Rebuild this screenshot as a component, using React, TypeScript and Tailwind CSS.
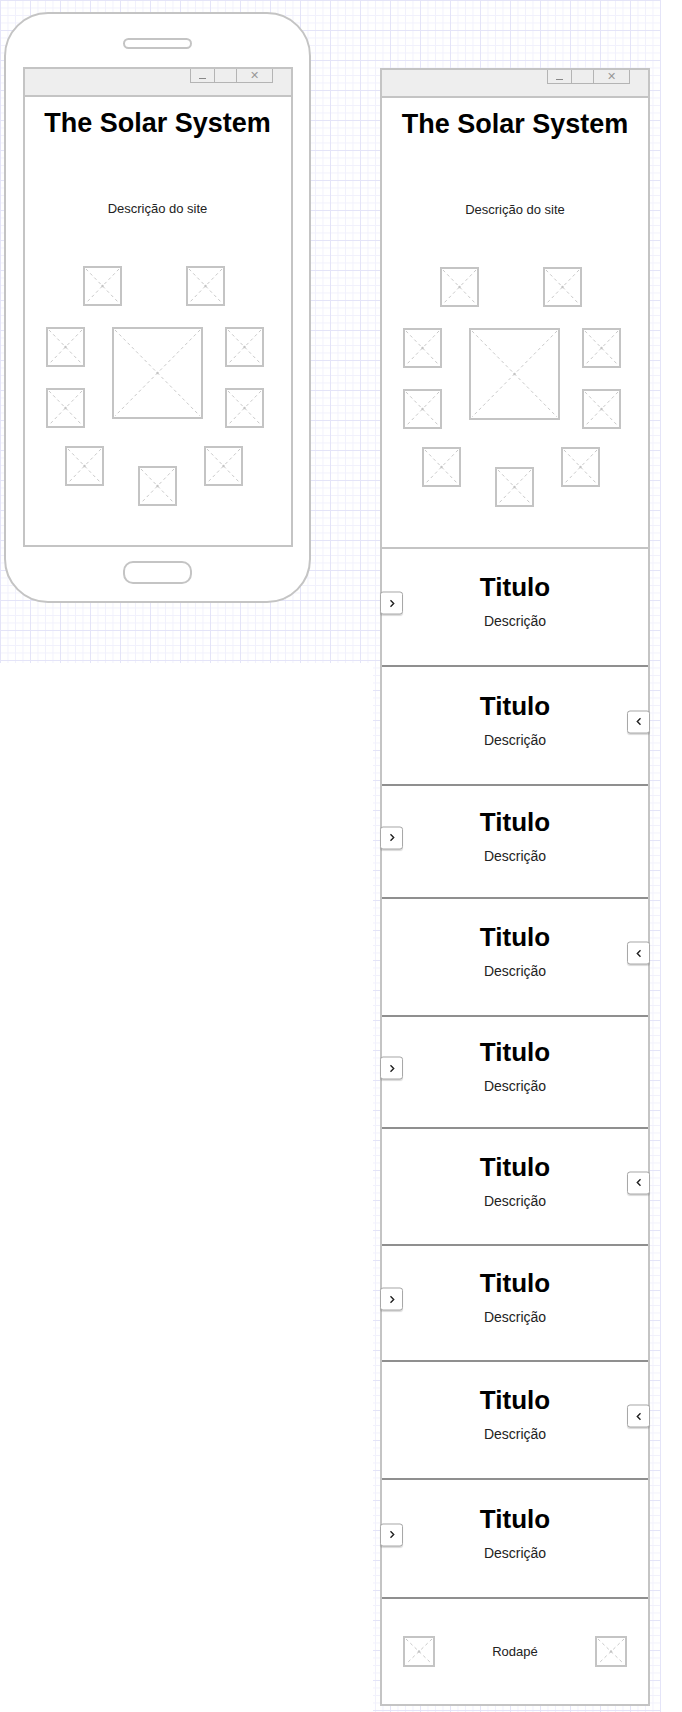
import type { ReactNode } from "react";

const GRID =
  "bg-[linear-gradient(to_right,#e4e4f8_1px,transparent_1px),linear-gradient(to_bottom,#e4e4f8_1px,transparent_1px),linear-gradient(to_right,#f1f1fc_1px,transparent_1px),linear-gradient(to_bottom,#f1f1fc_1px,transparent_1px)] bg-size-[30px_30px,30px_30px,7.5px_7.5px,7.5px_7.5px]";

// height of each content section, divider to divider
const SECTIONS = [118, 119, 113, 118, 112, 117, 116, 118, 119];

function Placeholder({ w, h, className = "" }: { w: number; h: number; className?: string }) {
  return (
    <svg width={w} height={h} viewBox={`0 0 ${w} ${h}`} className={`shrink-0 ${className}`}>
      <rect x="1" y="1" width={w - 2} height={h - 2} fill="#fff" stroke="#c4c4c4" strokeWidth="2" />
      <line x1="3" y1="3" x2={w - 3} y2={h - 3} stroke="#c9c9c9" strokeWidth="1" strokeDasharray="3 3" />
      <line x1={w - 3} y1="3" x2="3" y2={h - 3} stroke="#c9c9c9" strokeWidth="1" strokeDasharray="3 3" />
      <circle cx={w / 2} cy={h / 2} r="1.2" fill="#c4c4c4" />
    </svg>
  );
}

function TitleBar() {
  return (
    <div className="h-[28px] bg-[#eeeeee] border-b-2 border-[#c4c4c4] flex justify-end pr-[18px]">
      <div className="flex h-[14px] border-x border-b border-[#b4b4b4]">
        <div className="w-[23px] flex items-end justify-center pb-[3px]">
          <div className="w-[7px] h-px bg-[#888]" />
        </div>
        <div className="w-[22px] border-l border-[#b4b4b4]" />
        <div className="w-[36px] border-l border-[#b4b4b4] flex items-center justify-center text-[11px] leading-none text-[#999]">
          ✕
        </div>
      </div>
    </div>
  );
}

function Header({ bordered }: { bordered?: boolean }) {
  return (
    <div className={bordered ? "h-[451px] pt-[13px] border-b-2 border-[#c4c4c4]" : "h-[448px] pt-[13px]"}>
      <h1 className="text-[27px] leading-[27px] font-bold text-center text-black">The Solar System</h1>
      <p className="mt-[64px] text-[13px] leading-[16px] text-center text-[#222]">Descrição do site</p>

      {/* planet placeholders */}
      <div className="mt-[49px] flex pl-[58px] gap-[64px]">
        <Placeholder w={39} h={40} />
        <Placeholder w={39} h={40} />
      </div>
      <div className="mt-[21px] flex pl-[21px]">
        <div className="flex flex-col gap-[21px]">
          <Placeholder w={39} h={40} />
          <Placeholder w={39} h={40} />
        </div>
        <Placeholder w={91} h={92} className="ml-[27px]" />
        <div className="ml-[22px] flex flex-col gap-[21px]">
          <Placeholder w={39} h={40} />
          <Placeholder w={39} h={40} />
        </div>
      </div>
      <div className="mt-[18px] flex pl-[40px]">
        <Placeholder w={39} h={40} />
        <Placeholder w={39} h={40} className="ml-[34px] mt-[20px]" />
        <Placeholder w={39} h={40} className="ml-[27px]" />
      </div>
    </div>
  );
}

function Window({ children }: { children: ReactNode }) {
  return <div className="w-[270px] border-2 border-[#c4c4c4] bg-white">{children}</div>;
}

function ArrowButton({ dir }: { dir: "left" | "right" }) {
  return (
    <div
      className={`absolute top-1/2 -translate-y-[calc(50%+4px)] w-[23px] h-[23px] bg-white border border-[#a8a8a8] rounded-[3px] shadow-[0_1px_1px_rgba(0,0,0,0.15)] flex items-center justify-center ${
        dir === "right" ? "left-[-2px]" : "right-[-2px]"
      }`}
    >
      <svg width="10" height="10" viewBox="0 0 10 10" fill="none" stroke="#222" strokeWidth="1.4">
        {dir === "right" ? <path d="M3.5 1.8 L6.7 5 L3.5 8.2" /> : <path d="M6.5 1.8 L3.3 5 L6.5 8.2" />}
      </svg>
    </div>
  );
}

function Section({ height, side }: { height: number; side: "left" | "right" }) {
  return (
    <div className="relative border-b-2 border-[#8f8f8f] flex flex-col items-center justify-center pb-[10px]" style={{ height }}>
      <h2 className="text-[26px] leading-[28px] font-bold text-black">Titulo</h2>
      <p className="mt-[10px] text-[14px] leading-[20px] text-[#222]">Descrição</p>
      <ArrowButton dir={side === "left" ? "right" : "left"} />
    </div>
  );
}

export default function App() {
  return (
    <div className="w-[682px] h-[1712px] bg-white flex font-['Liberation_Sans',Arial,sans-serif]">
      {/* mobile mockup */}
      <div className={`w-[373px] h-[663px] pt-[12px] pl-[4px] ${GRID}`}>
        <div className="w-[307px] h-[591px] rounded-[44px] border-2 border-[#c4c4c4] bg-white flex flex-col items-center">
          <div className="mt-[24px] w-[69px] h-[11px] rounded-full border-2 border-[#c4c4c4]" />
          <div className="mt-[18px]">
            <Window>
              <TitleBar />
              <Header />
            </Window>
          </div>
          <div className="mt-[14px] w-[69px] h-[23px] rounded-[10px] border-2 border-[#c4c4c4]" />
        </div>
      </div>

      {/* desktop mockup */}
      <div className={`w-[288px] h-[1712px] pt-[68px] pl-[7px] bg-position-[-373px_0px] ${GRID}`}>
        <Window>
          <TitleBar />
          <Header bordered />
          {SECTIONS.map((h, i) => (
            <Section key={i} height={h} side={i % 2 === 0 ? "left" : "right"} />
          ))}
          <div className="h-[105px] flex items-center justify-between px-[21px]">
            <Placeholder w={32} h={31} />
            <span className="text-[13px] text-[#222]">Rodapé</span>
            <Placeholder w={32} h={31} />
          </div>
        </Window>
      </div>
    </div>
  );
}
